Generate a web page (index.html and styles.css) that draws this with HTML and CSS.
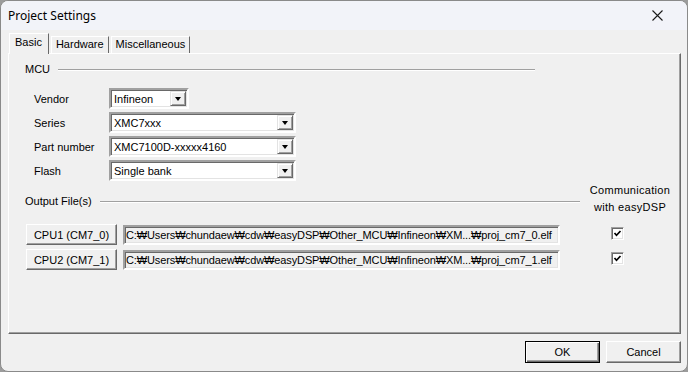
FILE: index.html
```html
<!DOCTYPE html>
<html lang="en">
<head>
  <meta charset="UTF-8" />
  <title>Project Settings</title>
  <link rel="stylesheet" href="styles.css">
</head>
<body>
  <div class="window">
    <!-- Title bar -->
    <div class="titlebar">
      <span class="title">Project Settings</span>
      <svg class="close" width="11" height="11" viewBox="0 0 11 11">
        <path d="M0.5 0.5 L10.5 10.5 M10.5 0.5 L0.5 10.5" stroke="#1a1a1a" stroke-width="1.1" fill="none"/>
      </svg>
    </div>

    <!-- Tabs -->
    <div class="tabs">
      <span class="tab active">Basic</span>
      <span class="tab">Hardware</span>
      <span class="tab">Miscellaneous</span>
    </div>

    <div class="panel">
      <!-- MCU group -->
      <div class="group-head mcu-head"><span>MCU</span><i class="rule"></i></div>
      <div class="mcu-grid">
        <span class="lbl">Vendor</span>
        <div class="combo short"><span>Infineon</span><b class="drop"></b></div>
        <span class="lbl">Series</span>
        <div class="combo"><span>XMC7xxx</span><b class="drop"></b></div>
        <span class="lbl">Part number</span>
        <div class="combo"><span>XMC7100D-xxxxx4160</span><b class="drop"></b></div>
        <span class="lbl">Flash</span>
        <div class="combo"><span>Single bank</span><b class="drop"></b></div>
      </div>

      <!-- Output files -->
      <div class="output">
        <div class="group-head out-head"><span>Output File(s)</span><i class="rule"></i></div>
        <div class="comm">Communication<br>with easyDSP</div>

        <button class="btn cpu">CPU1 (CM7_0)</button>
        <div class="path">C:₩Users₩chundaew₩cdw₩easyDSP₩Other_MCU₩Infineon₩XM...₩proj_cm7_0.elf</div>
        <span class="check"><svg width="9" height="9" viewBox="0 0 9 9"><path d="M1.5 4 L3.5 6.3 L7.5 2" stroke="#000" stroke-width="1.7" fill="none"/></svg></span>

        <button class="btn cpu">CPU2 (CM7_1)</button>
        <div class="path">C:₩Users₩chundaew₩cdw₩easyDSP₩Other_MCU₩Infineon₩XM...₩proj_cm7_1.elf</div>
        <span class="check"><svg width="9" height="9" viewBox="0 0 9 9"><path d="M1.5 4 L3.5 6.3 L7.5 2" stroke="#000" stroke-width="1.7" fill="none"/></svg></span>
      </div>
    </div>

    <!-- Dialog buttons -->
    <div class="footer">
      <button class="btn ok">OK</button>
      <button class="btn">Cancel</button>
    </div>
  </div>
</body>
</html>
```

FILE: styles.css
```css
/* Base */
*, *::before, *::after { box-sizing: border-box; }
body {
  margin: 0;
  background: #9c9c9c;
  font-family: "Liberation Sans", Arial, sans-serif;
  font-size: 11px;
  color: #000;
}

/* Window frame */
.window {
  width: 688px;
  height: 372px;
  border: 1px solid #8a8a8a;
  border-radius: 8px;
  background: #f0f0f0;
  overflow: hidden;
  display: flex;
  flex-direction: column;
}
.titlebar {
  height: 29px;
  flex: none;
  background: #f2f3f9;
  display: flex;
  align-items: center;
  justify-content: space-between;
  padding: 0 24px 0 7px;
}
.title {
  font-family: "Noto Sans", "Liberation Sans", sans-serif;
  font-size: 12px;
}
.close { margin-top: -1px; }

/* Tabs */
.tabs {
  height: 23px;
  flex: none;
  display: flex;
  align-items: flex-end;
  padding-left: 8px;
}
.tab {
  height: 17px;
  line-height: 15px;
  padding: 0 4px;
  border: 1px solid;
  border-color: #fff #696969 transparent #fff;
  border-bottom: none;
  margin-left: 2px;
}
.tab:first-child { margin-left: 0; }
.tab.active {
  height: 21px;
  line-height: 17px;
  padding: 0 6px 0 5px;
  margin-bottom: -1px;
  background: #f0f0f0;
  position: relative;
  z-index: 1;
}

/* Tab page */
.panel {
  height: 281px;
  flex: none;
  margin: 0 6px 0 7px;
  border: 1px solid;
  border-color: #fff #696969 #696969 #fff;
  box-shadow: inset -1px -1px #a0a0a0;
}

.group-head {
  display: flex;
  align-items: center;
  gap: 8px;
  height: 13px;
  line-height: 13px;
}
.group-head .rule {
  flex: 1;
  height: 2px;
  border-top: 1px solid #a0a0a0;
  border-bottom: 1px solid #fff;
  margin-top: 1px;
}
.mcu-head {
  width: 510px;
  margin: 9px 0 0 16px;
}

.mcu-grid {
  display: grid;
  grid-template-columns: 75px auto;
  grid-auto-rows: 21px;
  row-gap: 3px;
  align-items: center;
  justify-items: start;
  margin: 12px 0 0 25px;
}

/* Combo boxes */
.combo {
  width: 187px;
  height: 21px;
  background: #fff;
  border: 2px solid;
  border-color: #a0a0a0 #fff #fff #a0a0a0;
  box-shadow: inset 1px 1px #696969, inset -1px -1px #e3e3e3;
  display: flex;
  align-items: center;
  justify-content: space-between;
  padding: 1px 1px 1px 3px;
}
.combo.short { width: 80px; }
.drop {
  width: 16px;
  height: 15px;
  background: #f0f0f0;
  border: 1px solid;
  border-color: #e3e3e3 #696969 #696969 #e3e3e3;
  box-shadow: inset 1px 1px #fff, inset -1px -1px #a0a0a0;
  display: flex;
  align-items: center;
  justify-content: center;
}
.drop::after {
  content: "";
  border-left: 3.5px solid transparent;
  border-right: 3.5px solid transparent;
  border-top: 4px solid #000;
  margin-top: 1px;
}

/* Output files */
.output {
  display: grid;
  grid-template-columns: 91px 437px 1fr;
  column-gap: 6px;
  row-gap: 4px;
  align-items: center;
  margin: 1px 0 0 17px;
}
.out-head {
  grid-column: 1 / 3;
  margin: 0 -20px 0 -1px;
}
.comm {
  line-height: 17px;
  text-align: center;
  letter-spacing: 0.3px;
  margin: 0 0 4px 14px;
}

.btn {
  font: inherit;
  color: #000;
  background: #f0f0f0;
  border: 1px solid;
  border-color: #fff #696969 #696969 #fff;
  box-shadow: inset -1px -1px #a0a0a0;
  padding: 0;
  height: 21px;
}
.cpu { width: 91px; }

.path {
  height: 20px;
  line-height: 16px;
  padding: 0 1px;
  letter-spacing: -0.12px;
  border: 2px solid;
  border-color: #a0a0a0 #fff #fff #a0a0a0;
  box-shadow: inset 1px 1px #696969, inset -1px -1px #e3e3e3;
  white-space: nowrap;
  overflow: hidden;
}

.check {
  width: 13px;
  height: 13px;
  justify-self: start;
  margin: -2px 0 0 45px;
  background: #fff;
  border: 1px solid;
  border-color: #a0a0a0 #fff #fff #a0a0a0;
  box-shadow: inset 1px 1px #696969, inset -1px -1px #e3e3e3;
  display: flex;
  align-items: center;
  justify-content: center;
}

/* Footer */
.footer {
  display: flex;
  justify-content: flex-end;
  gap: 6px;
  padding: 7px 6px 0 0;
}
.footer .btn {
  width: 75px;
  height: 22px;
}
.btn.ok {
  border-color: #000;
  box-shadow: inset 1px 1px #fff, inset -1px -1px #696969, inset -2px -2px #a0a0a0;
}
```
